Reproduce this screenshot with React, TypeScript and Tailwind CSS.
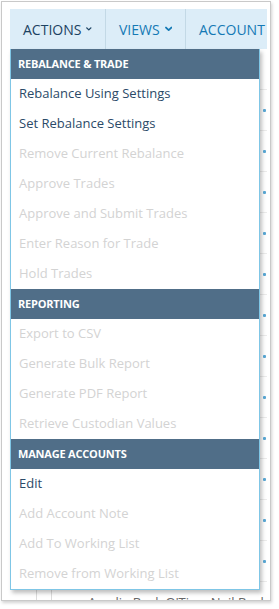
type Item = { label: string; enabled?: boolean };
type Section = { title: string; items: Item[] };

const sections: Section[] = [
  {
    title: "REBALANCE & TRADE",
    items: [
      { label: "Rebalance Using Settings", enabled: true },
      { label: "Set Rebalance Settings", enabled: true },
      { label: "Remove Current Rebalance" },
      { label: "Approve Trades" },
      { label: "Approve and Submit Trades" },
      { label: "Enter Reason for Trade" },
      { label: "Hold Trades" },
    ],
  },
  {
    title: "REPORTING",
    items: [
      { label: "Export to CSV" },
      { label: "Generate Bulk Report" },
      { label: "Generate PDF Report" },
      { label: "Retrieve Custodian Values" },
    ],
  },
  {
    title: "MANAGE ACCOUNTS",
    items: [
      { label: "Edit", enabled: true },
      { label: "Add Account Note" },
      { label: "Add To Working List" },
      { label: "Remove from Working List" },
    ],
  },
];

const Chevron = () => (
  <svg width="9" height="6" viewBox="0 0 9 6" fill="none">
    <path d="M1.2 1.2 L4.5 4.4 L7.8 1.2" stroke="currentColor" strokeWidth="2.2" strokeLinecap="round" strokeLinejoin="round" />
  </svg>
);

const NavTab = ({ label, dark, last }: { label: string; dark?: boolean; last?: boolean }) => (
  <div
    className={`flex items-center gap-[5px] h-full px-[13px] text-[14px] whitespace-nowrap ${
      last ? "" : "border-r border-[#c3d9e6]"
    } ${dark ? "text-[#1c4262]" : "text-[#1479b5]"}`}
  >
    <span>{label}</span>
    {!last && <Chevron />}
  </div>
);

const App = () => {
  const rows = Array.from({ length: 13 });
  return (
    <div
      className="w-[279px] h-[609px] bg-white pt-[1px] pl-[1px]"
      style={{ fontFamily: "'Open Sans', 'Noto Sans', sans-serif" }}
    >
      <div className="w-[270px] h-[600px] border border-[#c9c9c9] bg-white shadow-[1px_2px_3px_rgba(0,0,0,0.18)] pt-[7px] pl-[8px] overflow-hidden">
        <div className="w-[257px] h-[40px] bg-[#dcedf8] flex overflow-hidden">
          <div className="w-[96px] shrink-0">
            <NavTab label="ACTIONS" dark />
          </div>
          <div className="w-[80px] shrink-0">
            <NavTab label="VIEWS" />
          </div>
          <NavTab label="ACCOUNT" last />
        </div>

        <div className="relative w-[257px] h-[560px]">
          {/* grid behind the menu */}
          <div className="flex flex-col">
            {rows.map((_, i) => (
              <div key={i} className="h-[41px] border-b border-[#ececec] flex items-center justify-end pr-[1px]">
                {i > 0 && <span className="w-[3px] h-[3px] bg-[#5aa9d6] rounded-[1px]" />}
              </div>
            ))}
          </div>
          <div className="absolute left-[26px] top-[530px] w-px h-[30px] bg-[#dcdcdc]" />
          <div className="absolute left-[41px] top-[530px] w-px h-[30px] bg-[#dcdcdc]" />
          <div className="absolute left-[78px] top-[545px] text-[13px] leading-[16px] text-[#666] whitespace-nowrap">
            Amelia Buck O'Tina, Neil Buck
          </div>

          {/* actions dropdown */}
          <div className="absolute left-0 top-0 w-[250px] bg-white border-x border-b border-[#7fc6e6] shadow-[2px_3px_4px_rgba(0,0,0,0.25)]">
            {sections.map((s) => (
              <div key={s.title}>
                <div className="h-[30px] bg-[#506e88] flex items-center pl-[7px] text-[11px] font-bold text-white tracking-[-0.2px]">
                  {s.title}
                </div>
                {s.items.map((it) => (
                  <div
                    key={it.label}
                    className={`h-[30px] flex items-center pl-[8px] text-[13px] ${
                      it.enabled ? "text-[#2b4a68]" : "text-[#d3d3d3]"
                    }`}
                  >
                    {it.label}
                  </div>
                ))}
              </div>
            ))}
          </div>
        </div>
      </div>
    </div>
  );
};

export default App;
